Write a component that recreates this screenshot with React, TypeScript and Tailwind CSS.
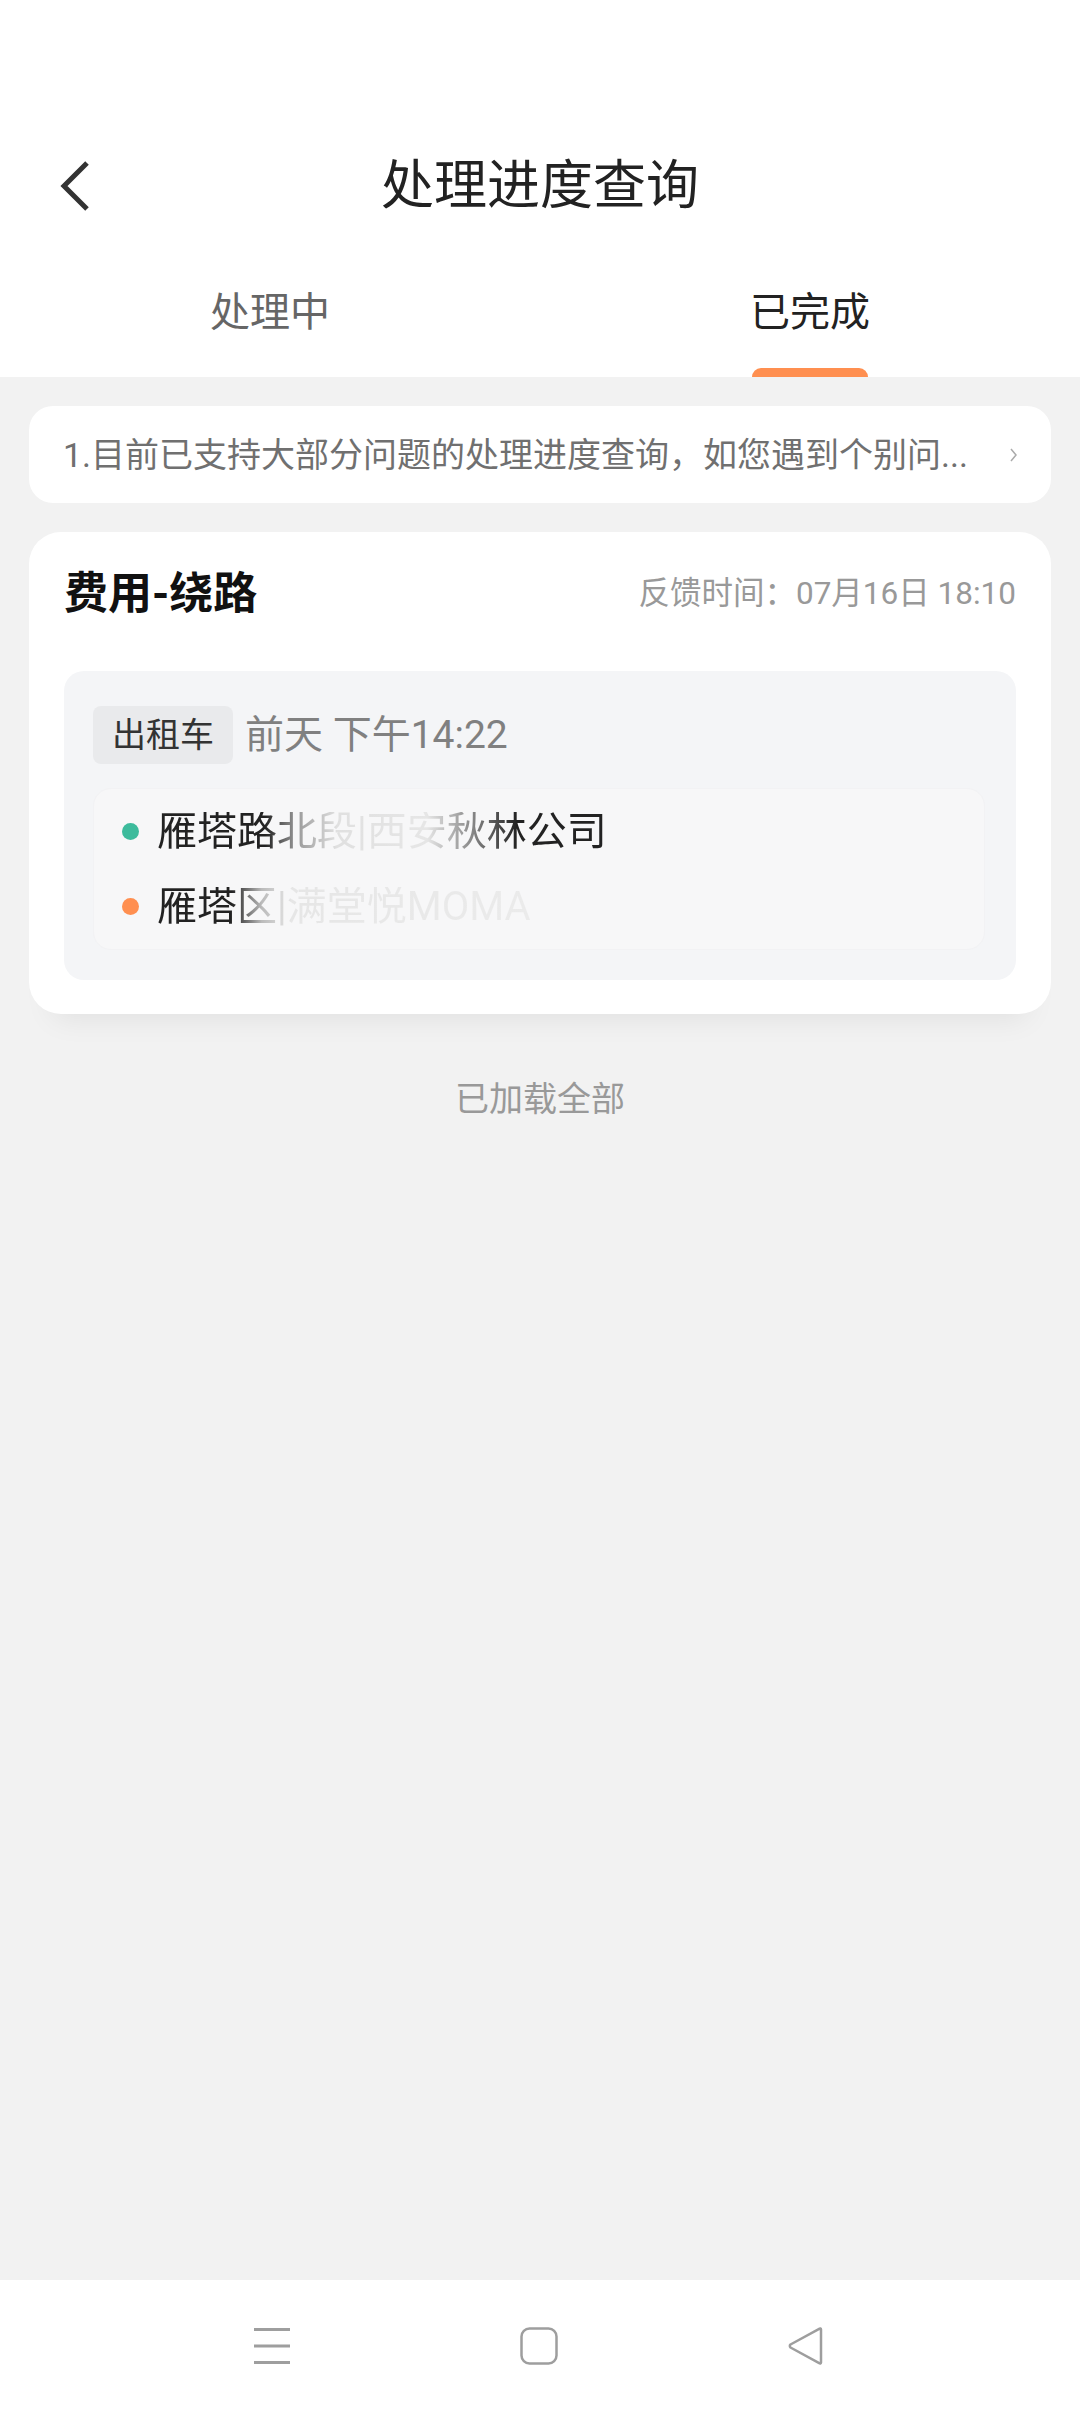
const font = { fontFamily: 'Roboto, "Noto Sans CJK SC", sans-serif' }

function Header() {
  return (
    <div className="bg-white h-[377px] flex flex-col">
      {/* title row */}
      <div className="mt-[140px] h-[92px] flex items-center">
        <div className="w-[150px] pl-[59px] flex items-center">
          <svg width="32" height="52" viewBox="0 0 32 52">
            <path d="M28 3L5 26l23 23" fill="none" stroke="#333" strokeWidth="5" />
          </svg>
        </div>
        <div className="flex-1 text-center text-[53px] leading-none text-[#222]">处理进度查询</div>
        <div className="w-[150px]" />
      </div>
      {/* tabs */}
      <div className="flex-1 flex">
        <Tab label="处理中" />
        <Tab label="已完成" active />
      </div>
    </div>
  )
}

function Tab({ label, active }: { label: string; active?: boolean }) {
  return (
    <div className="flex-1 flex flex-col items-center justify-end">
      <div className={`text-[40px] leading-none ${active ? 'text-[#222]' : 'text-[#666]'}`}>{label}</div>
      <div className={`mt-[35px] h-[9px] w-[116px] rounded-t-full ${active ? 'bg-[#FF8F50]' : 'bg-transparent'}`} />
    </div>
  )
}

function Notice() {
  return (
    <div className="h-[97px] bg-white rounded-[24px] flex items-center pl-[34px] pr-[32px]">
      <div className="flex-1 text-[34px] leading-[40px] text-[#707070] whitespace-nowrap">
        1.目前已支持大部分问题的处理进度查询，如您遇到个别问...
      </div>
      <svg width="10" height="16" viewBox="0 0 10 16" className="ml-[12px]">
        <path d="M2 2l5 6-5 6" fill="none" stroke="#aaa" strokeWidth="1.5" />
      </svg>
    </div>
  )
}

function OrderCard() {
  return (
    <div className="mt-[29px] bg-white rounded-[32px] px-[35px] pt-[40px] pb-[34px] shadow-[0_28px_30px_-24px_rgba(0,0,0,0.08)]">
      <div className="h-[44px] flex items-center justify-between">
        <div className="text-[44px] leading-none font-bold text-[#111]">费用-绕路</div>
        <div className="text-[31.5px] leading-none text-[#999]">反馈时间：07月16日 18:10</div>
      </div>
      <div className="mt-[55px] bg-[#F4F5F7] rounded-[20px] pl-[29px] pr-[31px] pt-[35px] pb-[30px]">
        <div className="flex items-center">
          <div className="h-[58px] w-[140px] rounded-[8px] bg-[#E9EAEC] flex items-center justify-center text-[34px] leading-none text-[#333]">
            出租车
          </div>
          <div className="ml-[12px] text-[39px] leading-none text-[#808080]">前天 下午14:22</div>
        </div>
        <div className="mt-[24px] bg-[#F7F7F8] rounded-[18px] border border-[#F2F2F4] py-[5px] pl-[28px]">
          <div className="h-[75px] flex items-center">
            <span className="w-[17px] h-[17px] rounded-full bg-[#3DBB9C]" />
            <span className="ml-[18px] text-[40px] leading-none bg-[linear-gradient(90deg,#222_0%,#222_24%,#9a9a9a_31%,#e0e0e0_40%,#e6e6e6_60%,#888_70%,#222_80%,#222_100%)] bg-clip-text text-transparent">
              雁塔路北段|西安秋林公司
            </span>
          </div>
          <div className="h-[75px] flex items-center">
            <span className="w-[17px] h-[17px] rounded-full bg-[#FF8F50]" />
            <span className="ml-[18px] text-[40px] leading-none bg-[linear-gradient(90deg,#222_0%,#222_20%,#bbb_28%,#e6e6e6_36%,#ebebeb_100%)] bg-clip-text text-transparent">
              雁塔区|满堂悦MOMA
            </span>
          </div>
        </div>
      </div>
    </div>
  )
}

function NavBar() {
  return (
    <div className="h-[132px] bg-white flex items-center justify-center">
      <div className="w-[570px] ml-[-3px] flex items-center justify-between">
        <svg width="36" height="36" viewBox="0 0 36 36">
          <rect x="0" y="0" width="36" height="3" fill="#9E9E9E" />
          <rect x="0" y="16.5" width="36" height="3" fill="#9E9E9E" />
          <rect x="0" y="33" width="36" height="3" fill="#9E9E9E" />
        </svg>
        <svg width="38" height="38" viewBox="0 0 38 38">
          <rect x="1.5" y="1.5" width="35" height="35" rx="8" fill="none" stroke="#9E9E9E" strokeWidth="2.5" />
        </svg>
        <svg width="36" height="38" viewBox="0 0 36 38">
          <path d="M33 2.5v33c0 1-1 1.4-1.8.6L2.5 20.5a2 2 0 0 1 0-3L31.2 1.9c.8-.8 1.8-.4 1.8.6z" fill="none" stroke="#9E9E9E" strokeWidth="2.5" strokeLinejoin="round" />
        </svg>
      </div>
    </div>
  )
}

export default function App() {
  return (
    <div className="min-h-[2412px] flex flex-col bg-[#F2F2F2]" style={font}>
      <Header />
      <div className="flex-1 px-[29px] pt-[29px]">
        <Notice />
        <OrderCard />
        <div className="mt-[68px] text-center text-[34px] leading-none text-[#999]">已加载全部</div>
      </div>
      <NavBar />
    </div>
  )
}
